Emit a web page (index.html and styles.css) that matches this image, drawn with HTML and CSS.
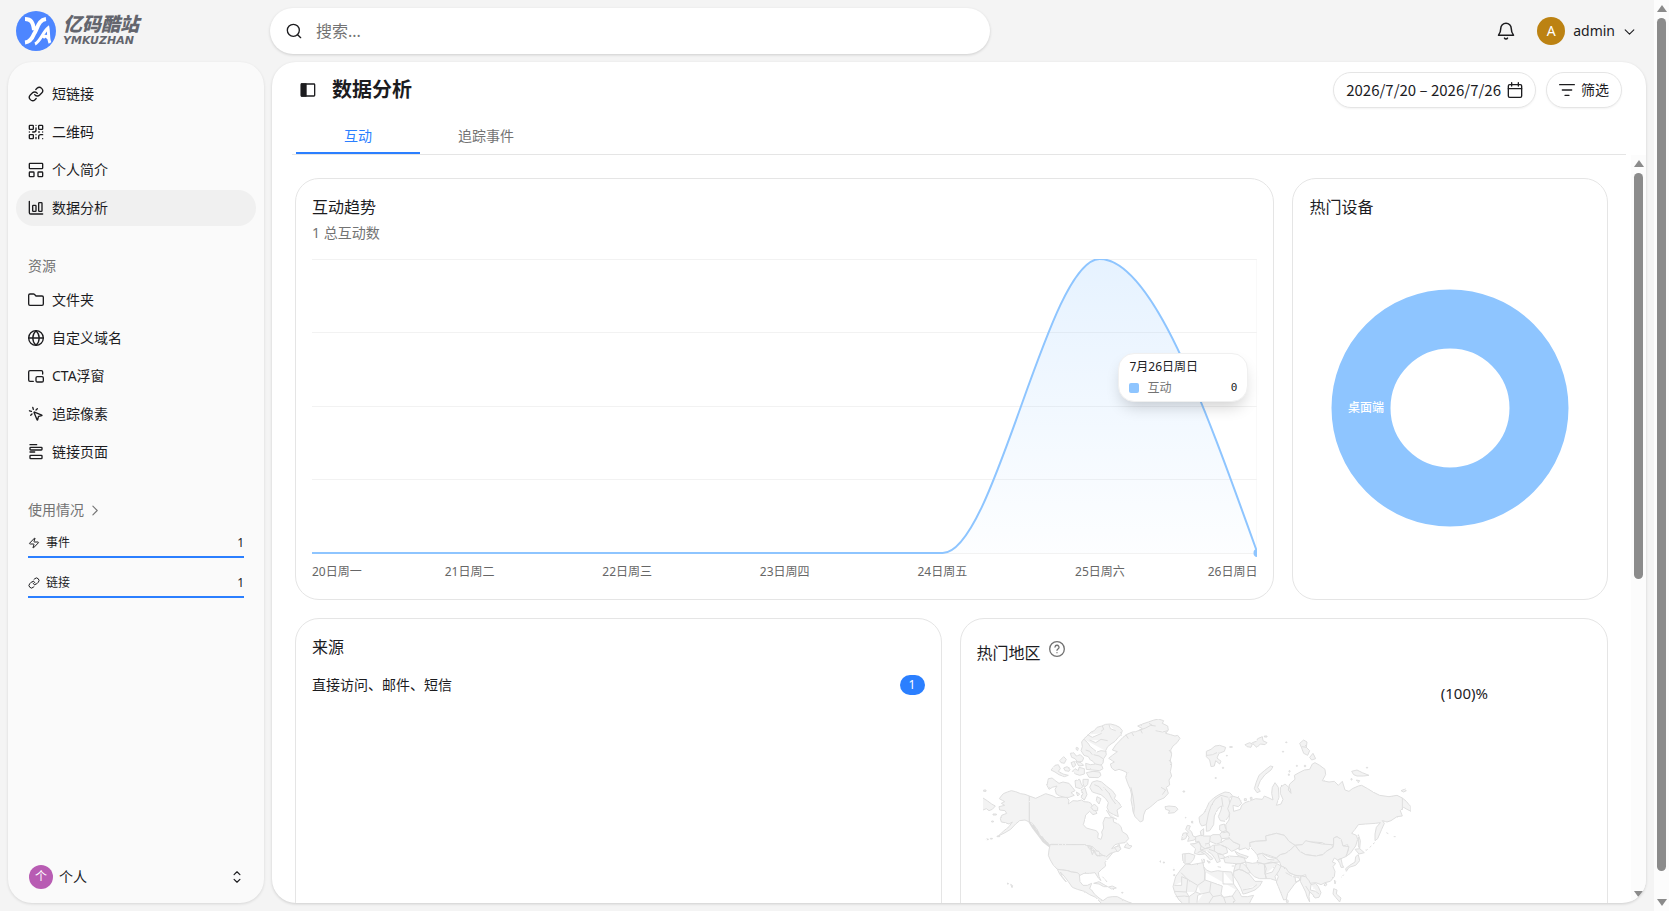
FILE: index.html
```html
<!DOCTYPE html>
<html lang="zh-CN">
<head>
<meta charset="utf-8">
<title>数据分析</title>
<link rel="stylesheet" href="styles.css">
</head>
<body>
<svg class="defs" aria-hidden="true">
  <symbol id="i-link" viewBox="0 0 24 24"><path d="M10 13a5 5 0 0 0 7.54.54l3-3a5 5 0 0 0-7.07-7.07l-1.72 1.71"/><path d="M14 11a5 5 0 0 0-7.54-.54l-3 3a5 5 0 0 0 7.07 7.07l1.71-1.71"/></symbol>
  <symbol id="i-qr" viewBox="0 0 24 24"><rect width="6" height="6" x="2" y="2" rx="1"/><rect width="6" height="6" x="16" y="2" rx="1"/><rect width="6" height="6" x="2" y="16" rx="1"/><path d="M22 16h-3a3 3 0 0 0-3 3v3M22 22v.01M12 6v3a3 3 0 0 1-3 3H7M2 12h.01M12 2h.01M12 16v.01M16 12h1M22 12v.01M12 22v-2"/></symbol>
  <symbol id="i-bio" viewBox="0 0 24 24"><rect width="20" height="8" x="2" y="2" rx="1"/><rect width="7" height="7" x="2" y="15" rx="1"/><rect width="7" height="7" x="15" y="15" rx="1"/></symbol>
  <symbol id="i-chart" viewBox="0 0 24 24"><path d="M2 2v17a2 2 0 0 0 2 2h18"/><rect x="7" y="8" width="5" height="9" rx="1"/><rect x="16" y="4" width="5" height="13" rx="1"/></symbol>
  <symbol id="i-folder" viewBox="0 0 24 24"><path d="M21 20a2 2 0 0 0 2-2V8a2 2 0 0 0-2-2h-9l-2.500-2.600A2 2 0 0 0 8 3H3a2 2 0 0 0-2 2v13a2 2 0 0 0 2 2Z"/></symbol>
  <symbol id="i-globe" viewBox="0 0 24 24"><circle cx="12" cy="12" r="11"/><path d="M12 1a15 15 0 0 0 0 22 15 15 0 0 0 0-22M1 12h22"/></symbol>
  <symbol id="i-pip" viewBox="0 0 24 24"><path d="M22 9V6a2 2 0 0 0-2-2H3a2 2 0 0 0-2 2v12a2 2 0 0 0 2 2h5"/><rect width="11" height="8" x="12" y="13" rx="2"/></symbol>
  <symbol id="i-click" viewBox="0 0 24 24"><path d="M14 4.100 12 6M5.100 8 2.200 7.200M6 12l-1.900 2M7.200 2.200 8 5.100M9.040 9.690a.5.5 0 0 1 .65-.65l11 4.500a.5.5 0 0 1-.07.950l-4.350 1.040a1 1 0 0 0-.74.740l-1.040 4.350a.5.5 0 0 1-.95.070z"/></symbol>
  <symbol id="i-page" viewBox="0 0 24 24"><path d="M3 1h10M3 12h7"/><rect x="3" y="5" width="18" height="4" rx="1"/><rect x="3" y="17" width="18" height="5" rx="1"/></symbol>
  <symbol id="i-zap" viewBox="0 0 24 24"><path d="M4 14a1 1 0 0 1-.78-1.630l9.900-10.200a.5.5 0 0 1 .86.460l-1.920 6.020A1 1 0 0 0 13 10h7a1 1 0 0 1 .78 1.630l-9.900 10.200a.5.5 0 0 1-.86-.460l1.920-6.020A1 1 0 0 0 11 14z"/></symbol>
  <symbol id="i-right" viewBox="0 0 24 24"><path d="m9 20 8-8-8-8"/></symbol>
  <symbol id="i-down" viewBox="0 0 24 24"><path d="m4 9 8 8 8-8"/></symbol>
  <symbol id="i-updown" viewBox="0 0 24 24"><path d="m7 16 5 5 5-5M7 8l5-5 5 5"/></symbol>
  <symbol id="i-search" viewBox="0 0 24 24"><circle cx="11" cy="11" r="9"/><path d="m22 22-4.500-4.500"/></symbol>
  <symbol id="i-bell" viewBox="0 0 24 24"><path d="M10 21.500a2.300 2.300 0 0 0 4 0M2 17.500h20c-2-2.500-3-4.500-3-9a7 7 0 0 0-14 0c0 4.500-1 6.500-3 9Z"/></symbol>
  <symbol id="i-calendar" viewBox="0 0 24 24"><path d="M7 1v5M17 1v5M2 10h20"/><rect width="20" height="19" x="2" y="4" rx="2"/></symbol>
  <symbol id="i-filter" viewBox="0 0 24 24"><path d="M1 4h22M5 12h14M9 20h6"/></symbol>
  <symbol id="i-panel" viewBox="0 0 24 24"><rect x="2" y="3" width="20" height="18" rx="1"/><path fill="currentColor" d="M2 3h7v18H2z"/></symbol>
  <symbol id="i-help" viewBox="0 0 24 24"><circle cx="12" cy="12" r="11"/><path d="M9 9a3 3 0 0 1 6 .8c0 2-3 2.500-3 4.200M12 17.500v.01"/></symbol>
</svg>

<div class="page">
  <div class="app">
    <header class="topbar">
      <a class="brand" href="#">
        <svg class="brand-mark" viewBox="0 0 40 40" aria-hidden="true"><circle cx="20" cy="20" r="20" fill="#4d86ff"/><path d="M9 8C15 8 17 11 18 19M30 8C22 9 22 17 18 23C16 28 14 31 9 31.500" fill="none" stroke="#fff" stroke-width="4"/><path d="M19 33C24 31 27 21 32 17C33 22 32 28 34 32M27 27C29 24 31 25 33 28" fill="none" stroke="#fff" stroke-width="3"/></svg>
        <span class="brand-text"><b>亿码酷站</b><i>YMKUZHAN</i></span>
      </a>
      <label class="search"><svg class="icon"><use href="#i-search"/></svg><input type="search" placeholder="搜索..." aria-label="搜索"></label>
      <div class="account">
        <button class="plain" aria-label="通知"><svg class="icon bell"><use href="#i-bell"/></svg></button>
        <button class="plain user"><span class="avatar">A</span>admin<svg class="icon chev"><use href="#i-down"/></svg></button>
      </div>
    </header>

    <aside class="sidebar">
      <nav class="nav">
        <a href="#"><svg class="icon"><use href="#i-link"/></svg>短链接</a>
        <a href="#"><svg class="icon"><use href="#i-qr"/></svg>二维码</a>
        <a href="#"><svg class="icon"><use href="#i-bio"/></svg>个人简介</a>
        <a href="#" class="active" aria-current="page"><svg class="icon"><use href="#i-chart"/></svg>数据分析</a>
      </nav>
      <h2 class="nav-title">资源</h2>
      <nav class="nav">
        <a href="#"><svg class="icon"><use href="#i-folder"/></svg>文件夹</a>
        <a href="#"><svg class="icon"><use href="#i-globe"/></svg>自定义域名</a>
        <a href="#"><svg class="icon"><use href="#i-pip"/></svg>CTA浮窗</a>
        <a href="#"><svg class="icon"><use href="#i-click"/></svg>追踪像素</a>
        <a href="#"><svg class="icon"><use href="#i-page"/></svg>链接页面</a>
      </nav>
      <a class="nav-title usage-title" href="#">使用情况<svg class="icon chev"><use href="#i-right"/></svg></a>
      <div class="usage">
        <div class="usage-row"><svg class="icon mini"><use href="#i-zap"/></svg>事件<span class="count">1</span></div>
        <div class="usage-row"><svg class="icon mini"><use href="#i-link"/></svg>链接<span class="count">1</span></div>
      </div>
      <button class="plain workspace"><span class="avatar small">个</span>个人<svg class="icon updown"><use href="#i-updown"/></svg></button>
    </aside>

    <main class="panel">
      <div class="panel-head">
        <button class="plain" aria-label="切换侧边栏"><svg class="icon"><use href="#i-panel"/></svg></button>
        <h1>数据分析</h1>
        <button class="pill date">2026/7/20 – 2026/7/26<svg class="icon"><use href="#i-calendar"/></svg></button>
        <button class="pill filter"><svg class="icon"><use href="#i-filter"/></svg>筛选</button>
      </div>
      <div class="tabs" role="tablist">
        <button class="tab selected" role="tab" aria-selected="true">互动</button>
        <button class="tab" role="tab" aria-selected="false">追踪事件</button>
      </div>
      <div class="scroller">
        <div class="reports">
          <div class="row first">
            <section class="card">
              <h3>互动趋势</h3>
              <p class="sub">1 总互动数</p>
              <div class="plot">
                <svg class="trend" viewBox="0 0 946 300" preserveAspectRatio="none" role="img" aria-label="互动趋势">
                  <defs><linearGradient id="fade" x1="0" y1="0" x2="0" y2="1"><stop offset="0" stop-color="#8ec5ff" stop-opacity=".22"/><stop offset="1" stop-color="#8ec5ff" stop-opacity=".02"/></linearGradient></defs>
                  <path d="M0 .5H946M0 73.500H946M0 147.500H946M0 220.500H946M0 294.500H946M945.500 0V294" stroke="#f2f2f2" fill="none"/>
                  <path d="M0 294H631C683 294 736 0 788 0C841 0 893 147 946 294Z" fill="url(#fade)"/>
                  <path d="M0 294H631C683 294 736 0 788 0C841 0 893 147 946 294" stroke="#8ec5ff" stroke-width="2" fill="none"/>
                  <circle cx="946" cy="294" r="4" fill="#8ec5ff"/>
                </svg>
                <div class="axis"><span>20日周一</span><span>21日周二</span><span>22日周三</span><span>23日周四</span><span>24日周五</span><span>25日周六</span><span>26日周日</span></div>
                <div class="tooltip"><div>7月26日周日</div><div class="tip-row"><span class="swatch"></span>互动<span class="tip-value">0</span></div></div>
              </div>
            </section>
            <section class="card devices">
              <h3>热门设备</h3>
              <div class="donut-wrap">
                <svg class="donut" viewBox="0 0 238 238" role="img" aria-label="桌面端"><circle cx="119" cy="119" r="89" fill="none" stroke="#8ec5ff" stroke-width="59"/><text x="35" y="123" text-anchor="middle">桌面端</text></svg>
              </div>
            </section>
          </div>
          <div class="row second">
            <section class="card">
              <h3>来源</h3>
              <div class="source">直接访问、邮件、短信<span class="badge">1</span></div>
            </section>
            <section class="card regions">
              <h3>热门地区<svg class="icon help"><use href="#i-help"/></svg></h3>
              <div class="region-body">
                <svg class="map" viewBox="42 0 1290 660" role="img" aria-label="世界地图">
                  <defs><filter id="coast" x="0" y="0" width="1" height="1"><feTurbulence type="fractalNoise" baseFrequency=".25" numOctaves="2" seed="4"/><feDisplacementMap in="SourceGraphic" scale="5" xChannelSelector="R" yChannelSelector="G"/></filter></defs>
                  <g class="land" filter="url(#coast)">
                    <path d="M181 288L168 283 155 281 140 275 127 272 115 276 103 281 97 288 91 296 100 301 107 305 97 310 107 316 90 320 92 330 108 332 113 340 98 346 94 356 97 366 108 368 120 372 130 366 120 380 104 393 88 408 108 398 125 388 140 372 152 362 168 360 181 366Z"/>
                    <path d="M42 294L56 303 68 312 79 318 70 328 60 332 52 326 42 330"/>
                    <path d="M44 270h7v4h-7zM72 342h10v3h-10zM68 363h5v3h-5zM52 417h6v2h-6zM64 415h6v2h-6zM84 408h8v2h-8zM115 549l4 2-3 2zM125 553l6 4-2 6zM573 483h3v3h-3zM583 486h3v3h-3zM613 508h3v3h-3zM614 524h4v3h-4zM642 273h5v3h-5zM649 352h2v2h-2zM668 364h3v5h-3zM458 577h4v2h-4z"/>
                    <path d="M181 288L200 295 215 288 230 281 243 285 252 288 262 293 275 292 290 290 300 300 298 312 312 302 325 303 338 300 345 305 358 306 366 310 372 322 378 330 384 340 372 344 362 334 350 345 347 360 343 374 352 384 366 388 382 392 388 400 386 414 396 418 400 405 398 396 404 384 402 368 408 352 420 354 432 352 434 366 448 372 456 380 460 395 474 404 479 416 468 428 452 430 438 434 428 446 444 440 450 432 455 448 440 455 425 460 412 470 402 466 390 458 370 440 345 434 248 433 240 436 228 420 214 408 208 395 198 380 190 370 181 366Z"/>
                    <path d="M181 366L186 374 194 378 200 390 206 396 210 408 220 412 226 424 236 430 242 440 234 434 222 424 212 410 204 400 192 384Z" stroke-width="5"/>
                    <path d="M243 434L345 434 370 440 366 450 375 452 380 464 392 468 402 466 412 470 425 460 430 460 415 478 408 488 410 498 398 508 388 518 390 530 396 542 388 534 378 518 362 520 345 520 333 526 325 518 308 516 296 512 282 510 265 508 252 494 244 480 238 466 240 450ZM356 440l12 2 8 8-6 14-4-12zM376 452l14 2 4 12-10 2z"/>
                    <path d="M265 508L282 510 296 512 308 516 325 518 331 524 333 545 342 556 355 556 368 550 362 566 368 570 376 582 390 594 402 602 416 592 430 590 445 590 460 598 478 606 488 609V640H430L396 609 380 592 362 584 346 574 325 568 310 562 298 545 285 528 274 516 280 530 292 546 284 538 272 522Z"/>
                    <path d="M374 550L390 545 405 554 416 560 404 560 390 552ZM418 561L430 558 442 564 428 567ZM466 442L474 428 480 436 489 438 482 446ZM436 442L448 438 456 446 446 456ZM400 530l6 6M408 538l6 8"/>
                    <path d="M419 175L430 166 445 155 430 150 440 135 462 112 474 103 490 96 500 95 508 92 520 86 506 78 520 72 538 66 555 60 568 57 584 62 580 70 596 78 598 90 590 100 605 104 618 108 626 106 633 115 624 128 612 138 605 150 608 165 604 180 608 195 604 215 608 228 600 240 602 255 592 262 598 280 585 294 566 302 550 316 540 324 530 330 524 345 522 362 514 366 506 358 498 350 492 335 490 320 486 300 488 285 484 268 476 250 470 232 474 218 462 212 450 208 438 212 428 204 424 192 436 186ZM508 92L530 84 545 76 560 78M560 92L580 96 596 92M540 70L550 76M470 104L478 116M488 97L494 108M514 88L520 100M600 150L608 160M600 180L608 190M576 262L590 270 580 284M486 262L492 290 496 320 494 340"/>
                    <path d="M354 108L366 96 376 92 384 82 398 78 410 73 425 72 440 76 452 82 460 92 456 104 448 112 438 124 426 132 416 140 410 152 412 164 404 176 402 190 392 198 380 194 372 184 364 180 358 170 345 166 336 152 340 140 338 126 345 116ZM345 118L356 128 364 140 374 148 384 156 396 152 412 154M356 104L370 112 384 106 398 100 M362 120L380 128 396 118 416 122 M400 78L404 88 396 94M420 74L424 86 440 92M350 150L362 154 370 164M374 164L390 168 402 176"/>
                    <path d="M350 190L364 194 380 192 398 196 402 206 392 212 370 210 352 208ZM352 218L372 214 392 216 396 226 388 233 360 232ZM246 210L258 196 268 194 274 206 268 214 282 222 298 226 286 230 270 224 258 216ZM272 182L284 170 292 178 286 190 276 188ZM284 204L294 200 304 206 300 214 288 212ZM304 160L314 158 322 168 334 164 344 174 340 184 326 186 318 176 308 172ZM306 188L316 184 320 196 312 202ZM310 214L318 206 328 212 330 202 346 206 346 222 332 226 320 222ZM322 142l6 2-2 8-5-4zM320 184L336 188 344 196 330 198Z"/>
                    <path d="M238 236L250 234 256 240 270 250 282 246 300 250 310 262 318 272 306 278 316 286 300 292 288 292 272 288 262 282 258 268 264 258 250 262 240 268 234 256ZM318 242L332 238 336 250 342 260 334 266 320 262ZM342 238L358 238 356 254 346 262 342 250ZM336 270L348 264 354 284 346 300 336 292 342 280ZM322 276L332 282 326 288ZM366 322L376 312 386 322 386 332 374 332Z"/>
                    <path d="M362 262L370 246 384 242 398 246 412 258 430 272 440 286 436 296 448 306 458 320 444 330 448 350 434 344 420 336 414 322 418 308 410 296 396 284 382 280 370 276ZM384 290L396 296 390 312 382 302ZM412 330L424 350 444 358M376 254L390 260 400 272M404 262L420 280 428 296 440 312"/>
                    <path d="M588 320L600 318 620 320 627 328 616 338 598 340 602 332 590 328Z"/>
                    <path d="M655 376L664 378 660 388 668 396 672 408 682 412 676 420 656 424 660 412 654 404 658 396 650 388ZM642 400L652 398 654 406 650 416 638 420 640 408Z"/>
                    <path d="M640 462L660 460 678 466 674 478 664 490 650 492 642 486ZM648 462V488M664 432L682 430 694 424 708 432 712 440 706 462 690 464 676 460 680 446Z"/>
                    <g transform="translate(660 30)">
                      <path d="M30 322L44 310 52 296 60 278 74 264 90 254 108 246 122 248 130 256 120 266 124 290 120 318 108 334 94 332 88 320 96 300 98 288 88 294 76 318 74 344 62 362 52 364 52 344 38 348 32 338ZM52 344L58 312 66 288 78 268 96 256 118 262M98 262L102 290"/>
                      <path d="M34 364L44 356 44 376 36 376ZM92 346L106 342 110 356 120 364 104 368 92 360ZM20 380L34 376 44 378 64 378 72 374 92 374 98 386 96 398 82 402 62 394 60 400 64 412 48 416 36 408 30 394 20 396ZM64 378L62 394M14 402L30 396 36 408 34 420 46 424 60 434 72 446 64 450 50 434 34 424 26 428M36 420L48 416 64 412 70 406 94 404 112 412 116 428 100 434 86 430 90 444 94 454 84 458 78 446 68 432 56 424M92 374L96 368 110 362 122 372 122 384 98 386M96 398L110 388 122 386 134 396 152 404 152 412 138 420 128 424 116 414 98 406M60 418L78 424 86 430 100 434 110 444 94 446M76 406L76 424M48 402L60 400"/>
                      <path d="M104 444L120 438 150 440 166 444 170 456 150 462 130 460 108 458ZM138 424L154 432 178 440 172 446 164 442 146 436ZM38 448L46 448 46 458 40 458ZM54 452L64 456 60 460ZM86 470L96 472M128 468h8"/>
                      <path d="M130 258L150 264 158 280 148 290 132 286 134 304 154 298 158 286 168 278 184 272 200 266 220 268 226 258 240 264 252 270 248 250 250 232 258 218 268 232 270 262 262 286 276 282 282 268 274 250 274 232 288 222 304 236 306 250 298 240 302 222 318 208 316 196 330 188 346 180 362 178 370 162 378 158 392 166 408 178 410 194 400 212 420 216 436 214 448 226 460 214 468 240 480 244 490 236 508 228 518 226 536 236 552 246 572 256 600 260 624 256 640 264 652 274 660 284 666 290 666 304 654 298 644 292 634 302 640 318 624 320 606 332 594 336 580 332 586 340 578 358 566 386 558 392 558 372 562 352 574 338 560 340 530 342 508 344 498 358 488 370 502 376 506 388 500 408 484 430 470 440 478 420 476 404 462 408 456 388 444 380 434 384 434 402 420 410 400 398 372 396 350 396 340 404 318 406 300 394 286 376 262 370 230 378 232 392 200 394 182 398 184 412 178 420 170 414 150 420 152 404 134 396 120 384 122 370 112 362 110 344 120 330 122 310 116 296ZM640 264V300"/>
                      <path d="M182 398L200 394 232 392 230 378 262 370 286 376 300 394 318 406 304 420 290 430 274 434 262 444 240 436 220 430 204 434 196 424 184 412Z"/>
                      <path d="M318 406L340 404 350 392 366 396 400 402 428 404 432 412 412 424 402 434 380 438 350 434 332 424Z"/>
                      <path d="M318 406L332 424 350 434 380 438 402 434 412 424 432 412 434 402 434 384 444 380 456 388 462 408 480 410 474 430 470 440 456 446 446 450 436 444 430 456 440 460 432 470 438 484 436 500 424 514 408 518 396 524 380 518 364 520 352 508 350 494 336 498 318 496 300 488 290 474 276 468 272 456 262 444 274 434 290 430 304 420Z"/>
                      <path d="M276 468L290 474 300 488 318 496 336 498 330 512 318 520 308 534 296 550 292 568 284 570 276 550 268 530 262 516 268 500 262 490ZM290 488L312 500 330 502M318 500L320 516 334 510"/>
                      <path d="M170 456L190 460 204 458 226 462 232 476 228 490 232 506 212 506 196 500 184 488 172 470ZM226 462L246 456 262 460 276 468 270 482 258 500 262 512 244 506 232 506 228 490ZM230 492L250 486 262 464M204 434L220 430 240 440 262 446 272 456 250 458 226 462 204 456 208 444ZM220 434L236 448 256 450"/>
                      <path d="M140 462L162 460 172 470 184 488 176 490 160 480 148 478 134 484ZM154 462L152 476M134 484L150 478 162 482 180 492 190 504 198 514 220 514 212 528 198 540 172 550 162 552 156 536 146 516 134 498ZM162 540L190 534 204 524"/>
                      <path d="M-10 462L8 464 30 460 42 458 44 470 52 480 66 486 86 482 100 484 128 486 132 500 134 522 150 545 158 560 175 560 194 556 186 570 172 600H0L-20 579-30 570-42 550-48 530-40 500-24 478ZM44 470L48 488 46 512 26 526-4 508-24 488M102 484V522H134M48 486V510L66 516 100 528 96 552 104 562 130 558 142 540M66 516L62 546 36 552 26 556 24 578M26 526L20 546 36 552M-4 508L-8 546-44 544M-8 546L0 560 20 546M62 546L72 560 60 579M72 560L94 556 104 562 110 579M130 558L138 572 132 579M-44 526L-22 526-22 500-4 508M-40 560L-14 558 0 560 0 579"/>
                      <path d="M336 498L350 500 360 512 366 524 380 520 388 530 396 548 390 562 378 564 370 552 362 546 360 560 362 576 354 560 350 546 342 530 334 514ZM366 524L364 540 380 544 390 552M350 528L362 546M408 520l6 2-4 6-5-2zM434 536L444 540 442 552 456 564 452 576 440 562 432 552ZM436 510L440 514 438 522ZM292 568l6 4-2 8-4-4z"/>
                      <path d="M508 434L512 452 500 466 480 472 472 484 470 476 482 466 498 456 500 440ZM498 418L512 416 526 428 510 432ZM508 374L514 392 512 416 508 408ZM446 450L456 446 460 464 464 472 456 472 452 460ZM530 422l6-4M542 412l5-4M552 402l5-4M592 368l6 3M614 380h6M458 502l6-8"/>
                      <path d="M252 170L244 168 226 182 210 196 202 216 196 236 204 248 214 244 206 232 214 212 228 194 246 180ZM52 124L66 118 78 108 92 106 110 112 106 124 90 130 84 144 96 154 92 162 80 152 76 168 66 170 62 150 52 140ZM54 136L70 134 84 128M168 104L182 98 190 102 186 112 174 110ZM190 98L202 94 206 86 220 80 222 92 234 98 228 104 214 102 204 112 196 106ZM332 100L344 90 354 96 352 112 362 122 356 136 344 130 338 114ZM362 142L372 130 380 146 368 150ZM338 110L354 112M488 184L504 180 520 188 540 196 524 198 504 198 494 194ZM502 210L512 212 508 218ZM636 242L646 238 652 242 644 246Z"/>
                      <path d="M122 110h8v2h-8zM112 136h3v2h-3zM78 203h4v2h-4zM100 172h4v3h-4zM226 78h8v3h-8zM290 96h4v2h-4zM280 124h4v2h-4zM300 182h3v4h-3zM298 192h3v4h-3zM322 166h3v3h-3zM532 172h4v2h-4zM486 206h3v4h-3zM166 266h6v6h-6zM184 262h5v6h-5zM346 166h4v4h-4zM8 334h3v3h-3z"/>
                    </g>
                  </g>
                </svg>
                <p class="share">(100)%</p>
              </div>
            </section>
          </div>
        </div>
        <div class="bar inner" aria-hidden="true"><i class="up"></i><i class="thumb"></i><i class="down"></i></div>
      </div>
    </main>
  </div>
  <div class="bar outer" aria-hidden="true"><i class="up"></i><i class="thumb"></i><i class="down"></i></div>
</div>
</body>
</html>
```
FILE: styles.css
```css
* { box-sizing: border-box; }
body { margin: 0; height: 100vh; overflow: hidden; background: #f4f4f4; color: #1c1c1f; font: 14px/20px "Noto Sans", "Noto Sans CJK SC", sans-serif; }
h1, h2, h3, p { margin: 0; font-weight: 400; }
a { color: inherit; text-decoration: none; }
button, input { font: inherit; color: inherit; }
.defs { display: none; }
.icon { width: 16px; height: 16px; flex: none; fill: none; stroke: currentColor; stroke-width: 2; stroke-linecap: round; stroke-linejoin: round; }
.plain { display: flex; align-items: center; padding: 0; border: 0; background: none; }

.page { display: flex; height: 100vh; }
.app { flex: 1; min-width: 0; display: grid; grid-template: 62px minmax(0, 1fr) / 256px minmax(0, 1fr); column-gap: 8px; padding: 0 8px 8px; }

.topbar { grid-column: 1 / -1; display: flex; align-items: center; padding: 0 10px 0 8px; }
.brand { width: 254px; display: flex; align-items: center; gap: 7px; color: #63656d; }
.brand-mark { width: 40px; height: 40px; }
.brand-text { display: flex; flex-direction: column; font-style: italic; }
.brand-text b { font-size: 19px; line-height: 20px; font-weight: 900; }
.brand-text i { font: italic 700 11px/14px "DejaVu Sans", sans-serif; }
.search { flex: 0 1 720px; height: 46px; display: flex; align-items: center; gap: 14px; padding: 0 16px; border-radius: 23px; background: #fff; box-shadow: 0 1px 3px rgba(0, 0, 0, .16); }
.search input { flex: 1; min-width: 0; border: 0; outline: 0; padding: 0; background: none; font-size: 16px; line-height: 24px; }
.search input::placeholder { color: #737373; }
.account { margin-left: auto; display: flex; align-items: center; gap: 22px; }
.bell { width: 18px; height: 18px; }
.user { gap: 8px; }
.avatar { display: grid; place-items: center; width: 28px; height: 28px; border-radius: 50%; background: #bc8212; color: #fff; }
.chev { width: 13px; height: 13px; }

.sidebar { display: flex; flex-direction: column; padding: 14px 8px; border-radius: 24px; background: #fafafa; box-shadow: 0 1px 3px rgba(0, 0, 0, .12); }
.nav { display: flex; flex-direction: column; gap: 2px; }
.nav a { display: flex; align-items: center; gap: 8px; height: 36px; padding: 0 12px; border-radius: 18px; }
.nav .active { background: #f0f0f0; }
.nav-title { margin: 30px 0 6px; padding: 0 12px; font-size: 14px; line-height: 20px; color: #737373; }
.usage-title { display: flex; align-items: center; gap: 4px; }
.usage { display: flex; flex-direction: column; gap: 16px; padding: 8px 12px; font-size: 12px; line-height: 20px; }
.usage-row { display: flex; align-items: center; gap: 6px; height: 24px; padding-bottom: 4px; border-bottom: 2px solid #2b7fff; }
.usage .mini { width: 12px; height: 12px; }
.count { margin-left: auto; }
.workspace { margin-top: auto; gap: 6px; padding: 0 12px 0 13px; }
.avatar.small { width: 24px; height: 24px; background: #b85cb3; font-size: 12px; }
.updown { width: 14px; height: 14px; margin-left: auto; }

.panel { display: flex; flex-direction: column; min-height: 0; border-radius: 24px; overflow: hidden; background: #fff; box-shadow: 0 1px 3px rgba(0, 0, 0, .16); }
.panel-head { display: flex; align-items: center; gap: 10px; padding: 10px 24px 10px 28px; }
h1 { flex: 1; margin-left: 6px; font-size: 20px; line-height: 28px; font-weight: 700; }
.pill { display: flex; align-items: center; gap: 6px; height: 36px; padding: 0 12px; border: 1px solid #e5e5e5; border-radius: 18px; background: #fff; box-shadow: 0 1px 2px rgba(0, 0, 0, .05); }
.pill.date { font-family: "Noto Sans CJK SC", sans-serif; font-size: 15px; }
.tabs { display: flex; margin: 0 20px; padding-left: 4px; border-bottom: 1px solid #e5e5e5; }
.tab { min-width: 124px; height: 36px; padding: 2px 38px 0; border: 0; border-bottom: 2px solid transparent; background: none; color: #737373; }
.tab.selected { color: #2b7fff; border-color: #2b7fff; }

.scroller { flex: 1; min-height: 0; display: flex; overflow: hidden; }
.reports { flex: 1; min-width: 0; display: flex; flex-direction: column; gap: 18px; padding: 23px 23px 0 23px; overflow: hidden; }
.row { flex: none; display: grid; gap: 18px; }
.row.first { grid-template-columns: 981fr 316fr; }
.row.second { grid-template-columns: 647fr 649fr; }
.card { min-width: 0; padding: 16px; border: 1px solid #e5e5e5; border-radius: 24px; }
.card h3 { font-size: 16px; line-height: 24px; }
.sub { padding-top: 2px; line-height: 24px; color: #737373; }
.plot { position: relative; margin-top: 14px; }
.trend { display: block; width: 100%; height: 300px; }
.axis { display: grid; grid-template-columns: repeat(12, minmax(0, 1fr)); padding: 3px 0 1px; font-size: 12px; line-height: 20px; color: #666; white-space: nowrap; }
.axis span { grid-column: span 2; display: flex; justify-content: center; }
.axis span:first-child { grid-column: span 1; justify-content: flex-start; }
.axis span:last-child { grid-column: span 1; justify-content: flex-end; }
.tooltip { position: absolute; right: 9px; top: 94px; width: 130px; height: 49px; padding: 5px 10px; border: 1px solid #f0f0f0; border-radius: 16px; background: #fff; box-shadow: 0 8px 16px -4px rgba(0, 0, 0, .2); font-size: 12px; line-height: 16px; display: grid; gap: 4px; }
.tip-row { display: flex; align-items: center; gap: 8px; color: #737373; }
.swatch { width: 10px; height: 10px; border-radius: 2px; background: #8ec5ff; }
.tip-value { margin-left: auto; font-family: "DejaVu Sans Mono", monospace; font-size: 11px; color: #1c1c1f; }
.devices { display: flex; flex-direction: column; }
.donut-wrap { flex: 1; display: grid; place-items: center; padding-top: 14px; }
.donut { width: 238px; height: 238px; }
.donut text { font-size: 12px; fill: #fff; font-weight: 500; }

.row.second .card { min-height: 420px; }
.source { display: flex; align-items: center; justify-content: space-between; padding-top: 16px; }
.badge { width: 25px; height: 20px; border-radius: 10px; background: #2b7fff; color: #fff; font-size: 12px; text-align: center; }
.regions { padding-top: 22px; }
.regions h3 { display: flex; gap: 8px; }
.help { color: #737373; }
.region-body { display: flex; justify-content: space-between; padding: 16px 103px 0 6px; }
.map { flex: 0 1 430px; min-width: 0; height: 220px; margin-top: 19px; }
.land { fill: #f3f3f3; stroke: #dedede; stroke-width: 3; stroke-linejoin: round; }
.share { font-size: 15px; line-height: 24px; }

.bar { flex: none; width: 15px; display: flex; flex-direction: column; align-items: center; background: #fcfcfc; }
.bar .thumb { width: 9px; border-radius: 5px; background: #8b8b8b; }
.bar .up, .bar .down { border: 5px solid transparent; border-top: 0; border-bottom: 7px solid #8b8b8b; }
.bar .down { margin-top: auto; border-top: 7px solid #8b8b8b; border-bottom: 0; }
.bar.outer { padding: 5px 0; }
.bar.outer .thumb { height: 853px; flex: 0 1 auto; margin-top: 6px; margin-bottom: 28px; }
.bar.inner { padding: 5px 0; }
.bar.inner .thumb { height: 55%; margin-top: 6px; }
```
